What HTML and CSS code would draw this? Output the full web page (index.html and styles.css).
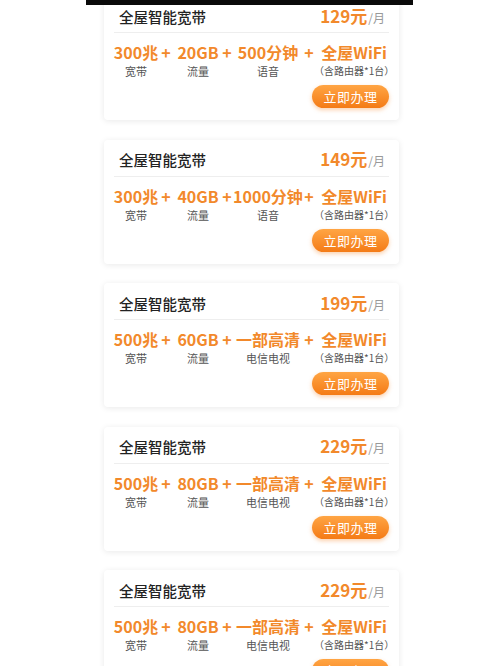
FILE: index.html
```html
<!DOCTYPE html>
<html lang="zh-CN">

<head>
    <meta charset="UTF-8">
    <meta name="viewport" content="width=device-width, initial-scale=1.0">
    <title>全屋智能宽带</title>
    <link rel="stylesheet" href="styles.css">
</head>

<body>
    <div class="topbar"></div>
    <div class="list">
        <div class="card">
            <div class="card-head">
                <span class="card-title">全屋智能宽带</span>
                <span class="price"><b>129元</b>/月</span>
            </div>
            <div class="pack">
                <div class="item"><span class="val">300兆</span><span class="lbl">宽带</span></div>
                <span class="plus">+</span>
                <div class="item"><span class="val">20GB</span><span class="lbl">流量</span></div>
                <span class="plus">+</span>
                <div class="item"><span class="val">500分钟</span><span class="lbl">语音</span></div>
                <span class="plus">+</span>
                <div class="item"><span class="val">全屋WiFi</span><span class="lbl small">（含路由器*1台）</span></div>
            </div>
            <div class="actions"><button class="btn">立即办理</button></div>
        </div>

        <div class="card">
            <div class="card-head">
                <span class="card-title">全屋智能宽带</span>
                <span class="price"><b>149元</b>/月</span>
            </div>
            <div class="pack">
                <div class="item"><span class="val">300兆</span><span class="lbl">宽带</span></div>
                <span class="plus">+</span>
                <div class="item"><span class="val">40GB</span><span class="lbl">流量</span></div>
                <span class="plus">+</span>
                <div class="item"><span class="val">1000分钟</span><span class="lbl">语音</span></div>
                <span class="plus">+</span>
                <div class="item"><span class="val">全屋WiFi</span><span class="lbl small">（含路由器*1台）</span></div>
            </div>
            <div class="actions"><button class="btn">立即办理</button></div>
        </div>

        <div class="card">
            <div class="card-head">
                <span class="card-title">全屋智能宽带</span>
                <span class="price"><b>199元</b>/月</span>
            </div>
            <div class="pack">
                <div class="item"><span class="val">500兆</span><span class="lbl">宽带</span></div>
                <span class="plus">+</span>
                <div class="item"><span class="val">60GB</span><span class="lbl">流量</span></div>
                <span class="plus">+</span>
                <div class="item"><span class="val">一部高清</span><span class="lbl">电信电视</span></div>
                <span class="plus">+</span>
                <div class="item"><span class="val">全屋WiFi</span><span class="lbl small">（含路由器*1台）</span></div>
            </div>
            <div class="actions"><button class="btn">立即办理</button></div>
        </div>

        <div class="card">
            <div class="card-head">
                <span class="card-title">全屋智能宽带</span>
                <span class="price"><b>229元</b>/月</span>
            </div>
            <div class="pack">
                <div class="item"><span class="val">500兆</span><span class="lbl">宽带</span></div>
                <span class="plus">+</span>
                <div class="item"><span class="val">80GB</span><span class="lbl">流量</span></div>
                <span class="plus">+</span>
                <div class="item"><span class="val">一部高清</span><span class="lbl">电信电视</span></div>
                <span class="plus">+</span>
                <div class="item"><span class="val">全屋WiFi</span><span class="lbl small">（含路由器*1台）</span></div>
            </div>
            <div class="actions"><button class="btn">立即办理</button></div>
        </div>

        <div class="card">
            <div class="card-head">
                <span class="card-title">全屋智能宽带</span>
                <span class="price"><b>229元</b>/月</span>
            </div>
            <div class="pack">
                <div class="item"><span class="val">500兆</span><span class="lbl">宽带</span></div>
                <span class="plus">+</span>
                <div class="item"><span class="val">80GB</span><span class="lbl">流量</span></div>
                <span class="plus">+</span>
                <div class="item"><span class="val">一部高清</span><span class="lbl">电信电视</span></div>
                <span class="plus">+</span>
                <div class="item"><span class="val">全屋WiFi</span><span class="lbl small">（含路由器*1台）</span></div>
            </div>
            <div class="actions"><button class="btn">立即办理</button></div>
        </div>
    </div>
</body>

</html>
```

FILE: styles.css
```css
:root {
    --orange: #f2892b;
    --text: #222222;
    --muted: #555555;
    --line: #eeeeee;
}

body {
    margin: 0;
    background: #ffffff;
    font-family: "Noto Sans CJK SC", "Noto Sans", sans-serif;
    color: var(--text);
    overflow: hidden;
}

/* black strip along the top edge */
.topbar {
    position: absolute;
    top: 0;
    left: 86px;
    width: 327px;
    height: 5px;
    background: #0a0a0a;
    z-index: 2;
}

.card {
    width: 295px;
    height: 124px;
    margin: 0 0 19.5px 104px;
    padding: 0 10px;
    box-sizing: border-box;
    background: #ffffff;
    border-radius: 4px;
    box-shadow: 0 1px 6px rgba(0, 0, 0, 0.09);
}

.card:first-child {
    margin-top: -4px;
}

.card-head {
    display: flex;
    justify-content: space-between;
    align-items: center;
    height: 37px;
    box-sizing: border-box;
    padding: 5px 4px 0 5px;
    border-bottom: 1px solid var(--line);
}

.card-title {
    font-size: 14.5px;
    line-height: 18px;
    font-weight: 500;
}

.price {
    font-size: 12px;
    line-height: 18px;
    color: #999999;
}

.price b {
    font-size: 17px;
    font-weight: 700;
    color: var(--orange);
    margin-right: 1px;
}

/* four columns with a "+" between each */
.pack {
    display: grid;
    grid-template-columns: 44px 16px 48px 10px 72px 10px 1fr;
    justify-items: center;
    align-items: start;
    padding-top: 9px;
}

.item {
    display: flex;
    flex-direction: column;
    align-items: center;
}

.val,
.plus {
    font-size: 16px;
    line-height: 20px;
    font-weight: 700;
    color: var(--orange);
    white-space: nowrap;
}

.lbl {
    margin-top: 2px;
    font-size: 11px;
    line-height: 14px;
    color: var(--muted);
    white-space: nowrap;
}

.lbl.small {
    font-size: 10px;
}

.actions {
    display: flex;
    justify-content: flex-end;
    margin-top: 7px;
}

.btn {
    width: 77px;
    height: 23px;
    padding: 0;
    border: none;
    border-radius: 12px;
    background: linear-gradient(180deg, #ffa544 0%, #f47b16 100%);
    box-shadow: 0 2px 4px rgba(244, 123, 22, 0.35);
    color: #ffffff;
    font-family: inherit;
    font-size: 13px;
    letter-spacing: 0.5px;
    cursor: pointer;
}
```
